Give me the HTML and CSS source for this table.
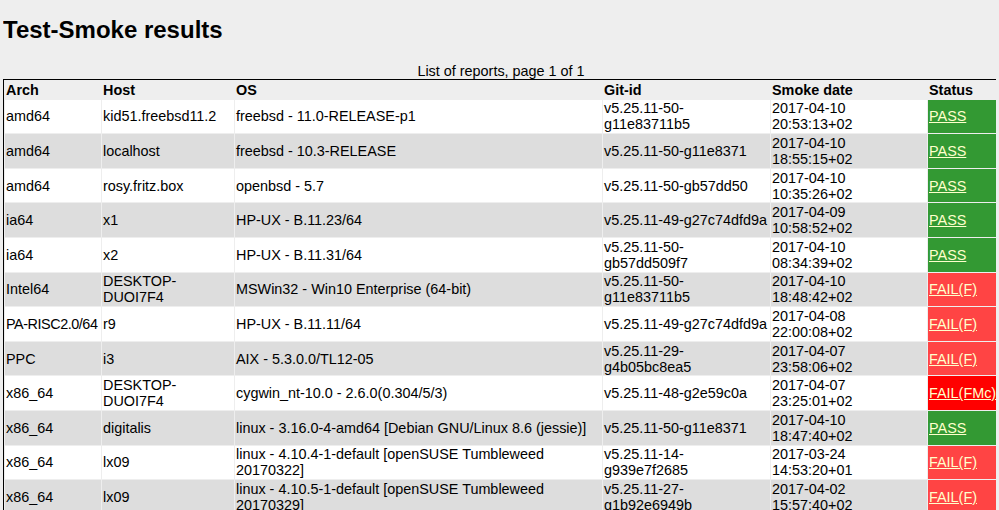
FILE: index.html
```html
<!DOCTYPE html>
<html>
<head>
<meta charset="utf-8">
<title>Test-Smoke results</title>
<link rel="stylesheet" href="styles.css">
</head>
<body>
<h1 class="title">Test-Smoke results</h1>
<table class="reports">
<caption>List of reports, page 1 of 1</caption>
<colgroup>
<col class="c-arch"><col class="c-host"><col class="c-os"><col class="c-git"><col class="c-date"><col class="c-status">
</colgroup>
<thead>
<tr><th>Arch</th><th>Host</th><th>OS</th><th>Git-id</th><th>Smoke date</th><th>Status</th></tr>
</thead>
<tbody>
<tr class="odd"><td class="arch">amd64</td><td>kid51.freebsd11.2</td><td>freebsd - 11.0-RELEASE-p1</td><td class="git">v5.25.11-50-g11e83711b5</td><td>2017-04-10 20:53:13+02</td><td class="pass"><a href="#">PASS</a></td></tr>
<tr class="even"><td class="arch">amd64</td><td>localhost</td><td>freebsd - 10.3-RELEASE</td><td class="git">v5.25.11-50-g11e8371</td><td>2017-04-10 18:55:15+02</td><td class="pass"><a href="#">PASS</a></td></tr>
<tr class="odd"><td class="arch">amd64</td><td>rosy.fritz.box</td><td>openbsd - 5.7</td><td class="git">v5.25.11-50-gb57dd50</td><td>2017-04-10 10:35:26+02</td><td class="pass"><a href="#">PASS</a></td></tr>
<tr class="even"><td class="arch">ia64</td><td>x1</td><td>HP-UX - B.11.23/64</td><td class="git">v5.25.11-49-g27c74dfd9a</td><td>2017-04-09 10:58:52+02</td><td class="pass"><a href="#">PASS</a></td></tr>
<tr class="odd"><td class="arch">ia64</td><td>x2</td><td>HP-UX - B.11.31/64</td><td class="git">v5.25.11-50-gb57dd509f7</td><td>2017-04-10 08:34:39+02</td><td class="pass"><a href="#">PASS</a></td></tr>
<tr class="even"><td class="arch">Intel64</td><td>DESKTOP-DUOI7F4</td><td>MSWin32 - Win10 Enterprise (64-bit)</td><td class="git">v5.25.11-50-g11e83711b5</td><td>2017-04-10 18:48:42+02</td><td class="fail"><a href="#">FAIL(F)</a></td></tr>
<tr class="odd"><td class="arch arch-long">PA-RISC2.0/64</td><td>r9</td><td>HP-UX - B.11.11/64</td><td class="git">v5.25.11-49-g27c74dfd9a</td><td>2017-04-08 22:00:08+02</td><td class="fail"><a href="#">FAIL(F)</a></td></tr>
<tr class="even"><td class="arch">PPC</td><td>i3</td><td>AIX - 5.3.0.0/TL12-05</td><td class="git">v5.25.11-29-g4b05bc8ea5</td><td>2017-04-07 23:58:06+02</td><td class="fail"><a href="#">FAIL(F)</a></td></tr>
<tr class="odd"><td class="arch">x86_64</td><td>DESKTOP-DUOI7F4</td><td>cygwin_nt-10.0 - 2.6.0(0.304/5/3)</td><td class="git">v5.25.11-48-g2e59c0a</td><td>2017-04-07 23:25:01+02</td><td class="failm"><a href="#">FAIL(FMc)</a></td></tr>
<tr class="even"><td class="arch">x86_64</td><td>digitalis</td><td>linux - 3.16.0-4-amd64 [Debian GNU/Linux 8.6 (jessie)]</td><td class="git">v5.25.11-50-g11e8371</td><td>2017-04-10 18:47:40+02</td><td class="pass"><a href="#">PASS</a></td></tr>
<tr class="odd"><td class="arch">x86_64</td><td>lx09</td><td>linux - 4.10.4-1-default [openSUSE Tumbleweed 20170322]</td><td class="git">v5.25.11-14-g939e7f2685</td><td>2017-03-24 14:53:20+01</td><td class="fail"><a href="#">FAIL(F)</a></td></tr>
<tr class="even"><td class="arch">x86_64</td><td>lx09</td><td>linux - 4.10.5-1-default [openSUSE Tumbleweed 20170329]</td><td class="git">v5.25.11-27-g1b92e6949b</td><td>2017-04-02 15:57:40+02</td><td class="fail"><a href="#">FAIL(F)</a></td></tr>
</tbody>
</table>
</body>
</html>
```
FILE: styles.css
```css
body {
  margin: 3px;
  background: #eeeeee;
  color: #000;
  font-family: "Liberation Sans", Arial, sans-serif;
  font-size: 14.4px;
}
.title {
  font-size: 24px;
  font-weight: bold;
  margin: 13px 0 19px;
}
.reports {
  table-layout: fixed;
  width: 996px;
  border: 1px solid #000;
  border-spacing: 1px;
  background: #eeeeee;
}
.reports caption {
  text-align: center;
}
.c-arch { width: 96px; }
.c-host { width: 132px; }
.c-os { width: 367px; }
.c-git { width: 167px; }
.c-date { width: 156px; }
.c-status { width: 69px; }
.reports th,
.reports td {
  padding: 0.8px 1px;
  text-align: left;
  vertical-align: middle;
}
.reports th {
  font-weight: bold;
  background: #eeeeee;
}
.reports td.arch { white-space: nowrap; }
.reports td.arch-long { letter-spacing: -0.45px; }
.reports td.git { padding-right: 2.5px; }
.odd td { background: #ffffff; }
.even td { background: #dddddd; }
.reports td.pass { background: #339933; white-space: nowrap; }
.reports td.fail { background: #ff4444; white-space: nowrap; }
.reports td.failm { background: #ff0000; white-space: nowrap; }
.reports td a {
  color: #ffffcc;
  text-decoration: underline;
}
```
